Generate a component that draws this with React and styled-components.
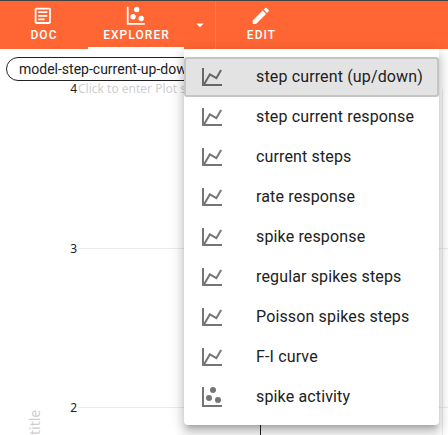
import React from "react";
import styled, { createGlobalStyle } from "styled-components";

const Global = createGlobalStyle`
  * { box-sizing: border-box; }
  html, body { margin: 0; background: #fff; overflow: hidden; }
  body { font-family: Roboto, sans-serif; }
`;

const paths = {
  line: "M16,11.78L20.24,4.45L21.97,5.45L16.74,14.5L10.23,10.75L5.46,19H22V21H2V3H4V17.54L9.5,8L16,11.78Z",
  scatter:
    "M2,2H4V20H22V22H2V2M9,10A3,3 0 0,1 12,13A3,3 0 0,1 9,16A3,3 0 0,1 6,13A3,3 0 0,1 9,10M13,2A3,3 0 0,1 16,5A3,3 0 0,1 13,8A3,3 0 0,1 10,5A3,3 0 0,1 13,2M18,12A3,3 0 0,1 21,15A3,3 0 0,1 18,18A3,3 0 0,1 15,15A3,3 0 0,1 18,12Z",
  doc: "M5,3C3.89,3 3,3.89 3,5V19C3,20.11 3.89,21 5,21H19C20.11,21 21,20.11 21,19V5C21,3.89 20.11,3 19,3H5M5,5H19V19H5V5M7,7V9H17V7H7M7,11V13H17V11H7M7,15V17H14V15H7Z",
  pencil:
    "M20.71,7.04C21.1,6.65 21.1,6 20.71,5.63L18.37,3.29C18,2.9 17.35,2.9 16.96,3.29L15.12,5.12L18.87,8.87M3,17.25V21H6.75L17.81,9.93L14.06,6.18L3,17.25Z",
  caret: "M7,10L12,15L17,10H7Z",
};

const Svg = styled.svg`
  display: block;
  flex: none;
  width: ${(p) => p.$size}px;
  height: ${(p) => p.$size}px;
  fill: currentColor;
`;

const Icon = ({ name, size = 24 }) => (
  <Svg viewBox="0 0 24 24" $size={size}>
    <path d={paths[name]} />
  </Svg>
);

const Page = styled.div`
  position: relative;
  display: flex;
  flex-direction: column;
  width: 448px;
  height: 435px;
  overflow: hidden;
  background: #fff;
`;

const Toolbar = styled.nav`
  display: flex;
  flex: none;
  height: 49px;
  border-top: 1px solid #424242;
  background: #ff6633;
  color: #fff;
`;

const Tab = styled.button`
  display: flex;
  flex-direction: column;
  align-items: center;
  flex: none;
  width: ${(p) => p.$width}px;
  padding: 4px 0 0;
  border: 0;
  border-bottom: 2px solid ${(p) => (p.$active ? "#fff" : "transparent")};
  background: none;
  color: inherit;
  font: 500 12px/16px Roboto, sans-serif;
  letter-spacing: 1.05px;

  svg {
    margin-right: ${(p) => p.$iconGap || 0}px;
  }
`;

const TabLabel = styled.span`
  margin-left: ${(p) => p.$indent || 0}px;
`;

const CaretButton = styled.button`
  display: flex;
  align-items: center;
  justify-content: center;
  flex: none;
  width: 32px;
  padding: 0;
  border: 0;
  border-right: 1px solid #ff7b4f;
  background: none;
  color: inherit;
`;

const Content = styled.main`
  display: flex;
  flex-direction: column;
  flex: 1;
  padding-top: 8px;
`;

const Chip = styled.div`
  flex: none;
  width: 240px;
  height: 24px;
  margin-left: 6px;
  padding-left: 12px;
  border: 1px solid #222;
  border-radius: 12px;
  font-size: 14px;
  line-height: 22px;
  color: #212121;
  white-space: nowrap;
`;

const Plot = styled.svg`
  display: block;
  width: 448px;
  height: 354px;
  font-family: "Noto Sans", sans-serif;
  font-size: 12px;
`;

const Menu = styled.div`
  position: absolute;
  left: 184px;
  top: 49px;
  width: 255px;
  height: 376px;
  padding: 8px 0;
  border-radius: 0 0 4px 4px;
  background: #fff;
  box-shadow: 0 5px 5px -3px rgba(0, 0, 0, 0.2), 0 8px 10px 1px rgba(0, 0, 0, 0.14),
    0 3px 14px 2px rgba(0, 0, 0, 0.12);
`;

const MenuItem = styled.div`
  display: flex;
  align-items: center;
  gap: 32px;
  height: 40px;
  padding-left: ${(p) => (p.$selected ? 14 : 16)}px;
  border: ${(p) => (p.$selected ? "2px solid #c5c5c5" : "0")};
  border-radius: ${(p) => (p.$selected ? 3 : 0)}px;
  background: ${(p) => (p.$selected ? "#e3e3e3" : "transparent")};
  color: ${(p) => (p.$selected ? "#676767" : "#757575")};
`;

const MenuText = styled.span`
  color: #212121;
  font-size: 16px;
  line-height: 24px;
  letter-spacing: 0.144px;
  white-space: nowrap;
`;

const items = [
  "step current (up/down)",
  "step current response",
  "current steps",
  "rate response",
  "spike response",
  "regular spikes steps",
  "Poisson spikes steps",
  "F-I curve",
  "spike activity",
];

export default function App() {
  return (
    <Page>
      <Global />
      <Toolbar>
        <Tab $width={88} $iconGap={2}>
          <Icon name="doc" size={21.6} />
          <TabLabel>DOC</TabLabel>
        </Tab>
        <Tab $width={96} $active>
          <Icon name="scatter" size={21.6} />
          <TabLabel $indent={1}>EXPLORER</TabLabel>
        </Tab>
        <CaretButton>
          <Icon name="caret" size={18} />
        </CaretButton>
        <Tab $width={90}>
          <Icon name="pencil" size={21.6} />
          <TabLabel $indent={1}>EDIT</TabLabel>
        </Tab>
      </Toolbar>
      <Content>
        <Chip>model-step-current-up-down</Chip>
        <Plot viewBox="0 81 448 354">
          <path d="M78 248.5H448M78 407.5H448M442.5 89V435" stroke="#ebebeb" fill="none" />
          <path d="M260.5 410V435" stroke="#222" />
          <g fill="#222" textAnchor="end">
            <text x="77" y="93">4</text>
            <text x="77" y="253">3</text>
            <text x="77" y="412">2</text>
          </g>
          <g fill="#cfcfcf">
            <text x="78" y="93">Click to enter Plot subtitle</text>
            <text fontSize="14" transform="translate(40 435) rotate(-90)">title</text>
          </g>
        </Plot>
      </Content>
      <Menu>
        {items.map((label, i) => (
          <MenuItem key={label} $selected={i === 0}>
            <Icon name={label === "spike activity" ? "scatter" : "line"} />
            <MenuText>{label}</MenuText>
          </MenuItem>
        ))}
      </Menu>
    </Page>
  );
}
